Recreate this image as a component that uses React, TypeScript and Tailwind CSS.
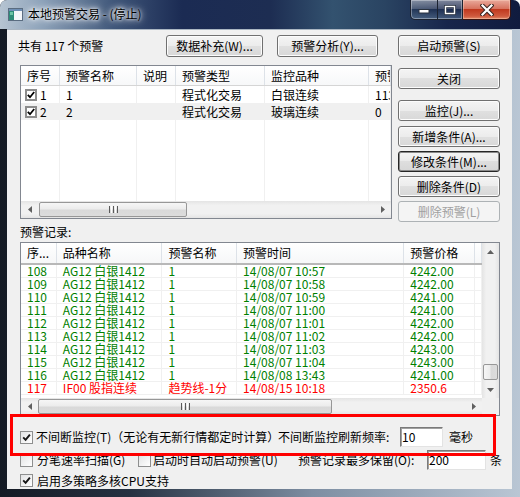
import React from "react";

type Row = [string, string, string, string, string];

const records: Row[] = [
  ["108", "AG12 白银1412", "1", "14/08/07 10:57", "4242.00"],
  ["109", "AG12 白银1412", "1", "14/08/07 10:58", "4242.00"],
  ["110", "AG12 白银1412", "1", "14/08/07 10:59", "4241.00"],
  ["111", "AG12 白银1412", "1", "14/08/07 11:00", "4241.00"],
  ["112", "AG12 白银1412", "1", "14/08/07 11:01", "4242.00"],
  ["113", "AG12 白银1412", "1", "14/08/07 11:02", "4242.00"],
  ["114", "AG12 白银1412", "1", "14/08/07 11:03", "4243.00"],
  ["115", "AG12 白银1412", "1", "14/08/07 11:04", "4243.00"],
  ["116", "AG12 白银1412", "1", "14/08/08 13:43", "4241.00"],
  ["117", "IF00 股指连续", "趋势线-1分", "14/08/15 10:18", "2350.6"],
];

const Btn = ({ label, cls, focused, disabled }: { label: string; cls: string; focused?: boolean; disabled?: boolean }) => (
  <div
    className={`flex shrink-0 items-center justify-center rounded-[3px] border text-[12px] leading-none whitespace-nowrap ${cls} ${
      disabled
        ? "border-[#adb2b5] bg-[#f4f4f4] text-[#a0a0a0]"
        : focused
        ? "border-[#262626] bg-[linear-gradient(#f4f4f4,#e9e9e9_50%,#dedede_50%,#d6d6d6)] text-black shadow-[inset_0_0_0_1px_#8a8a8a]"
        : "border-[#707070] bg-[linear-gradient(#f4f4f4,#ececec_50%,#e0e0e0_50%,#d8d8d8)] text-black shadow-[inset_0_0_0_1px_#fcfcfc]"
    }`}
  >
    {label}
  </div>
);

const Check = ({ on = true }: { on?: boolean }) => (
  <span className="flex h-[13px] w-[13px] shrink-0 items-center justify-center border border-[#8e8f8f] bg-[linear-gradient(135deg,#e2e3e4,#ffffff)]">
    {on && (
      <svg width="9" height="9" viewBox="0 0 9 9">
        <path d="M1.2 4.4 L3.6 6.9 L7.9 1.6" fill="none" stroke="#161616" strokeWidth="1.9" />
      </svg>
    )}
  </span>
);

const ListCheck = () => (
  <span className="flex h-[12px] w-[12px] shrink-0 items-center justify-center border-2 border-[#8c8c8c] bg-white">
    <svg width="8" height="8" viewBox="0 0 8 8">
      <path d="M0.8 3.8 L3 6.2 L7.2 1" fill="none" stroke="#000" strokeWidth="1.8" />
    </svg>
  </span>
);

const ArrowL = () => (
  <svg width="4" height="7" viewBox="0 0 4 7">
    <path d="M4 0 L0 3.5 L4 7 Z" fill="#606060" />
  </svg>
);
const ArrowR = () => (
  <svg width="4" height="7" viewBox="0 0 4 7">
    <path d="M0 0 L4 3.5 L0 7 Z" fill="#606060" />
  </svg>
);
const ArrowU = () => (
  <svg width="7" height="4" viewBox="0 0 7 4">
    <path d="M0 4 L3.5 0 L7 4 Z" fill="#606060" />
  </svg>
);
const ArrowD = () => (
  <svg width="7" height="4" viewBox="0 0 7 4">
    <path d="M0 0 L3.5 4 L7 0 Z" fill="#606060" />
  </svg>
);

const GripV = () => (
  <div className="flex gap-[1px]">
    <span className="h-[7px] w-[1px] bg-[#5a5a5a]" />
    <span className="h-[7px] w-[1px] bg-white" />
    <span className="h-[7px] w-[1px] bg-[#5a5a5a]" />
    <span className="h-[7px] w-[1px] bg-white" />
    <span className="h-[7px] w-[1px] bg-[#5a5a5a]" />
  </div>
);

const HScroll = ({ thumb }: { thumb: string }) => (
  <div className="flex h-[17px] flex-1 bg-[linear-gradient(#e4e4e4,#f1f1f1_25%,#f1f1f1_75%,#e4e4e4)]">
    <div className="flex w-[17px] items-center justify-center">
      <ArrowL />
    </div>
    <div className="flex flex-1 py-[1px]">
      <div className={`flex items-center justify-center rounded-[2px] border border-[#979797] bg-[linear-gradient(#f6f6f6,#ececec_45%,#d9d9d9_55%,#dcdcdc)] ${thumb}`}>
        <GripV />
      </div>
    </div>
    <div className="flex w-[17px] items-center justify-center">
      <ArrowR />
    </div>
  </div>
);

const topCols = [
  { w: "w-[39px]", h: "序号" },
  { w: "w-[77px]", h: "预警名称" },
  { w: "w-[39px]", h: "说明" },
  { w: "w-[89px]", h: "预警类型" },
  { w: "w-[104px]", h: "监控品种" },
  { w: "flex-1", h: "预警" },
];

const TopList = () => {
  const rows = [
    ["1", "1", "", "程式化交易", "白银连续", "113"],
    ["2", "2", "", "程式化交易", "玻璃连续", "0"],
  ];
  return (
    <div className="flex h-[154px] w-[372px] flex-col overflow-hidden border border-[#828790] bg-white">
      <div className="flex h-[20px] border-b border-[#d5d5d5] bg-[linear-gradient(#ffffff,#f7f8f9)]">
        {topCols.map((c, i) => (
          <div key={i} className={`flex items-center overflow-hidden whitespace-nowrap border-r border-[#dde2e8] pl-[6px] text-[12px] ${c.w}`}>
            {c.h}
          </div>
        ))}
      </div>
      {rows.map((r, ri) => (
        <div key={ri} className={`flex h-[17px] ${ri === 1 ? "bg-[#f0f0f0]" : "bg-white"}`}>
          {topCols.map((c, i) => (
            <div key={i} className={`flex items-center overflow-hidden whitespace-nowrap border-r border-[#f0f0f0] text-[12px] leading-[13px] ${c.w} ${i === 0 ? "pl-[4px]" : "pl-[6px]"}`}>
              {i === 0 ? (
                <>
                  <ListCheck />
                  <span className="ml-[3px]">{r[0]}</span>
                </>
              ) : (
                r[i]
              )}
            </div>
          ))}
        </div>
      ))}
      <div className="flex flex-1">
        {topCols.map((c, i) => (
          <div key={i} className={`border-r border-[#f0f0f0] ${c.w}`} />
        ))}
      </div>
      <div className="flex">
        <HScroll thumb="ml-[1px] w-[148px]" />
      </div>
    </div>
  );
};

const recCols = [
  { w: "w-[36px]", h: "序..." },
  { w: "w-[106px]", h: "品种名称" },
  { w: "w-[75px]", h: "预警名称" },
  { w: "w-[168px]", h: "预警时间" },
  { w: "w-[71px]", h: "预警价格" },
  { w: "flex-1", h: "" },
];

const RecordList = () => (
  <div className="flex h-[174px] w-[480px] flex-col border border-[#828790] bg-white">
    <div className="flex flex-1">
      <div className="flex flex-1 flex-col overflow-hidden">
        <div className="flex h-[22px] border-b-2 border-[#b8b8b8] bg-[linear-gradient(#ffffff,#f6f7f8)]">
          {recCols.map((c, i) => (
            <div key={i} className={`flex items-center overflow-hidden whitespace-nowrap border-r border-[#dde2e8] pl-[6px] text-[12px] ${c.w}`}>
              {c.h}
            </div>
          ))}
        </div>
        {records.map((r, ri) => (
          <div key={ri} className={`flex h-[13px] ${ri === 9 ? "text-[#ff0000]" : "text-[#008000]"}`}>
            {recCols.map((c, i) => (
              <div key={i} className={`flex items-center overflow-visible whitespace-nowrap border-r border-b border-[#f0f0f0] pl-[6px] text-[12px] leading-[12px] ${c.w}`}>
                {i < 5 ? r[i] : ""}
              </div>
            ))}
          </div>
        ))}
      </div>
      <div className="flex w-[17px] flex-col bg-[linear-gradient(90deg,#e4e4e4,#f1f1f1_25%,#f1f1f1_75%,#e4e4e4)]">
        <div className="flex h-[17px] items-center justify-center">
          <ArrowU />
        </div>
        <div className="flex flex-1 flex-col justify-end px-[1px] pb-[1px]">
          <div className="flex h-[16px] items-center justify-center rounded-[2px] border border-[#979797] bg-[linear-gradient(90deg,#f6f6f6,#ececec_45%,#d9d9d9_55%,#dcdcdc)]" />
        </div>
        <div className="flex h-[17px] items-center justify-center">
          <ArrowD />
        </div>
      </div>
    </div>
    <div className="flex h-[17px]">
      <HScroll thumb="w-[294px]" />
      <div className="w-[17px] bg-[#f0f0f0]" />
    </div>
  </div>
);

const TitleButtons = () => (
  <div className="flex h-[20px] items-stretch">
    <div className="flex w-[53px] overflow-hidden rounded-bl-[5px] border border-t-0 border-[#1b2230] bg-[linear-gradient(rgba(255,255,255,0.45),rgba(255,255,255,0.18)_50%,rgba(40,60,90,0.35)_50%,rgba(110,140,170,0.5))] shadow-[inset_0_0_0_1px_rgba(255,255,255,0.35)]">
      <div className="flex w-[27px] items-center justify-center border-r border-[#1b2230]">
        <svg width="12" height="8" viewBox="0 0 12 8">
          <rect x="1" y="3.5" width="10" height="3.5" fill="#fff" stroke="#2a3340" strokeWidth="1" />
        </svg>
      </div>
      <div className="flex flex-1 items-center justify-center">
        <svg width="12" height="10" viewBox="0 0 12 10">
          <rect x="1.5" y="1.5" width="9" height="7" fill="none" stroke="#2a3340" strokeWidth="3" />
          <rect x="1.5" y="1.5" width="9" height="7" fill="none" stroke="#fff" strokeWidth="1.4" />
        </svg>
      </div>
    </div>
    <div className="flex w-[48px] items-center justify-center rounded-br-[5px] border border-l-0 border-t-0 border-[#3a1410] bg-[linear-gradient(#e9a99b,#d7735f_45%,#c0391f_50%,#cf5a3e_85%,#e28b6a)] shadow-[inset_0_0_0_1px_rgba(255,220,200,0.4)]">
      <svg width="14" height="12" viewBox="0 0 14 12">
        <path d="M2.5 1.5 L11.5 10.5 M11.5 1.5 L2.5 10.5" stroke="#3a2520" strokeWidth="4.2" strokeLinecap="square" />
        <path d="M2.5 1.5 L11.5 10.5 M11.5 1.5 L2.5 10.5" stroke="#fff" strokeWidth="2.2" strokeLinecap="square" />
      </svg>
    </div>
  </div>
);

export default function App() {
  return (
    <div className="h-[497px] w-[520px] bg-white font-['Noto_Sans_CJK_SC',sans-serif] text-[12px] text-black">
      <div className="flex h-full w-full flex-col overflow-hidden rounded-t-[7px] bg-[linear-gradient(90deg,#141a24_0%,#263242_25%,#7d8ea2_60%,#b9c6d4_100%)]">
        <div className="flex h-[29px] shrink-0 items-start bg-[linear-gradient(90deg,#b6c4d2_0%,#8ea3ba_8%,#3f5679_22%,#1b2b53_35%,#1d2d52_52%,#33526f_64%,#2a4462_74%,#17254b_86%,#101b3e_100%)]">
          <div className="ml-[8px] mt-[8px] flex h-[13px] w-[15px] shrink-0">
            <svg width="15" height="13" viewBox="0 0 15 13">
              <rect x="0.5" y="0.5" width="14" height="12" fill="#f4f7fa" stroke="#5a6c80" />
              <rect x="1" y="1" width="13" height="2" fill="#6f8fb5" />
              <rect x="1" y="3" width="5" height="9" fill="#2e8c78" />
              <rect x="2" y="4" width="3" height="3" fill="#6cc4a6" />
            </svg>
          </div>
          <div className="ml-[5px] mt-[6px] whitespace-nowrap text-[12px] leading-[16px] text-black [text-shadow:0_0_6px_#fff,0_0_3px_#fff,0_0_10px_#fff]">
            本地预警交易 - (停止)
          </div>
          <div className="flex-1" />
          <TitleButtons />
          <div className="w-[9px]" />
        </div>
        <div className="mx-[7px] mr-[8px] flex h-[460px] shrink-0 flex-col">
          <div className="relative flex h-[460px] w-[505px] flex-col border-t border-[#aab6c2] bg-[#f0f0f0]">
            <div className="mt-[5px] flex h-[22px] items-center pl-[11px]">
              <span className="w-[148px] whitespace-nowrap">共有 117 个预警</span>
              <Btn label="数据补充(W)..." cls="h-[22px] w-[97px]" />
              <div className="w-[14px]" />
              <Btn label="预警分析(Y)..." cls="h-[22px] w-[101px]" />
              <div className="w-[20px]" />
              <Btn label="启动预警(S)" cls="h-[22px] w-[102px]" />
            </div>
            <div className="mt-[8px] flex h-[157px] pl-[13px]">
              <TopList />
              <div className="ml-[6px] flex w-[102px] flex-col">
                <Btn label="关闭" cls="mt-[3px] h-[21px] w-[102px]" />
                <Btn label="监控(J)..." cls="mt-[11px] h-[21px] w-[102px]" />
                <Btn label="新增条件(A)..." cls="mt-[5px] h-[21px] w-[102px]" />
                <Btn label="修改条件(M)..." cls="mt-[4px] h-[21px] w-[102px]" focused />
                <Btn label="删除条件(D)" cls="mt-[4px] h-[21px] w-[102px]" />
                <Btn label="删除预警(L)" cls="mt-[4px] h-[21px] w-[102px]" disabled />
              </div>
            </div>
            <div className="flex h-[20px] items-center pl-[13px]">预警记录:</div>
            <div className="flex pl-[13px]">
              <RecordList />
            </div>
            <div className="mt-[11px] flex h-[20px] items-center pl-[13px]">
              <Check />
              <span className="ml-[3px] w-[242px] whitespace-nowrap">不间断监控(T)（无论有无新行情都定时计算）</span>
              <span className="w-[122px] whitespace-nowrap">不间断监控刷新频率:</span>
              <div className="flex h-[20px] w-[43px] items-center border border-[#7a7a7a] border-b-[#e3e3e3] border-r-[#e3e3e3] bg-white pl-[1px] shadow-[inset_1px_1px_0_#a0a0a0]">10</div>
              <span className="ml-[6px]">毫秒</span>
            </div>
            <div className="mt-[3px] flex h-[20px] items-center pl-[13px]">
              <Check on={false} />
              <span className="ml-[4px] w-[101px] whitespace-nowrap">分笔速率扫描(G)</span>
              <Check on={false} />
              <span className="ml-[2px] w-[145px] whitespace-nowrap">启动时自动启动预警(U)</span>
              <span className="w-[129px] whitespace-nowrap">预警记录最多保留(O):</span>
              <div className="flex h-[20px] w-[59px] items-center border border-[#7a7a7a] border-b-[#e3e3e3] border-r-[#e3e3e3] bg-white pl-[1px] shadow-[inset_1px_1px_0_#a0a0a0]">200</div>
              <span className="ml-[4px]">条</span>
            </div>
            <div className="mt-[2px] flex h-[17px] items-center pl-[13px]">
              <Check />
              <span className="ml-[4px] whitespace-nowrap">启用多策略多核CPU支持</span>
            </div>
            <div className="pointer-events-none absolute left-[3px] top-[384px] h-[42px] w-[486px] border-[3px] border-[#ff0000]" />
          </div>
        </div>
      </div>
    </div>
  );
}
